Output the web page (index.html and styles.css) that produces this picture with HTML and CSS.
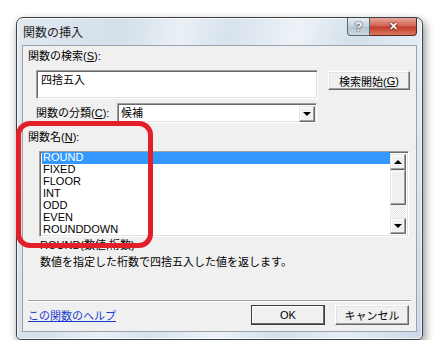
FILE: index.html
```html
<!DOCTYPE html>
<html lang="ja">
<head>
    <meta charset="UTF-8">
    <title>関数の挿入</title>
    <link rel="stylesheet" href="styles.css">
</head>
<body>
    <div class="window">
        <div class="titlebar">
            <span class="title">関数の挿入</span>
            <div class="caption-btns">
                <span class="btn-help">?</span>
                <span class="btn-close">✕</span>
            </div>
        </div>

        <div class="client">
            <div class="label">関数の検索(<u>S</u>):</div>
            <div class="search-row">
                <div class="textbox">四捨五入</div>
                <div class="button btn-search">検索開始(<u>G</u>)</div>
            </div>

            <div class="category-row">
                <span class="cat-label">関数の分類(<u>C</u>):</span>
                <div class="dropdown">
                    <span>候補</span>
                    <span class="drop-arrow"><span class="tri-down"></span></span>
                </div>
            </div>

            <div class="label label-list">関数名(<u>N</u>):</div>
            <div class="listbox">
                <div class="items">
                    <div class="item selected">ROUND</div>
                    <div class="item">FIXED</div>
                    <div class="item">FLOOR</div>
                    <div class="item">INT</div>
                    <div class="item">ODD</div>
                    <div class="item">EVEN</div>
                    <div class="item">ROUNDDOWN</div>
                </div>
                <div class="scrollbar">
                    <span class="sb-btn"><span class="tri-up"></span></span>
                    <span class="sb-thumb"></span>
                    <span class="sb-track"></span>
                    <span class="sb-btn"><span class="tri-down"></span></span>
                </div>
            </div>

            <div class="desc">
                <div>ROUND(数値,桁数)</div>
                <div>数値を指定した桁数で四捨五入した値を返します。</div>
            </div>

            <div class="separator"></div>

            <div class="footer">
                <a class="help-link" href="#">この関数のヘルプ</a>
                <div class="button btn-ok">OK</div>
                <div class="button btn-cancel">キャンセル</div>
            </div>
        </div>

        <!-- 赤い強調枠 -->
        <div class="highlight"></div>
    </div>
</body>
</html>
```

FILE: styles.css
```css
body {
    margin: 0;
    background: #fff;
    font-family: "Liberation Sans", "Noto Sans CJK JP", sans-serif;
    font-size: 11px;
    color: #000;
}

.window {
    position: relative;
    box-sizing: border-box;
    width: 407px;
    height: 323px;
    margin: 17px 0 0 16px;
    padding: 0 5px 7px 5px;
    border: 1px solid #3e4146;
    border-radius: 7px 7px 5px 5px;
    background: linear-gradient(105deg, #e2e9f0 0%, #d4dfea 22%, #eaf0f5 34%, #d7e2ec 44%, #edf2f7 58%, #d3dfea 70%, #e6edf4 84%, #c9d9e8 100%);
    box-shadow: 2px 4px 10px rgba(0, 0, 0, 0.45), inset 0 0 0 1px rgba(255, 255, 255, 0.7);
}

.titlebar {
    display: flex;
    justify-content: space-between;
    align-items: flex-start;
    height: 27px;
}

.title {
    padding: 7px 0 0 1px;
    line-height: 16px;
    font-size: 12px;
    color: #1c1c1c;
}

.caption-btns {
    display: flex;
}

.btn-help,
.btn-close {
    box-sizing: border-box;
    height: 18px;
    display: flex;
    align-items: center;
    justify-content: center;
    color: #fff;
    font-weight: bold;
    border: 1px solid #5c6570;
    border-top: none;
}

.btn-help {
    width: 23px;
    border-radius: 0 0 0 4px;
    background: linear-gradient(to bottom, #e6edf3, #c4d0dc 50%, #b2c1cf 51%, #cbd8e4);
    font-size: 13px;
    text-shadow: 0 0 2px #334, 0 0 1px #223;
}

.btn-close {
    width: 47px;
    border-left: none;
    border-color: #5a2620;
    border-radius: 0 0 4px 0;
    background: linear-gradient(to bottom, #e7a89c, #d0604f 48%, #c23b28 52%, #d9785f);
    font-size: 11px;
    text-shadow: 0 0 2px #400, 0 0 1px #300;
}

.client {
    box-sizing: border-box;
    height: 287px;
    padding: 3px 5px 0 5px;
    background: #f0f0f0;
    border: 1px solid #98a4b0;
}

.label {
    line-height: 14px;
}

.search-row {
    display: flex;
    align-items: flex-start;
    margin-top: 7px;
}

.textbox {
    box-sizing: border-box;
    width: 282px;
    height: 29px;
    margin-left: 8px;
    padding: 2px 4px;
    background: #fff;
    border: 1px solid;
    border-color: #a0a0a0 #fff #fff #a0a0a0;
    box-shadow: inset 1px 1px #696969, inset -1px -1px #e3e3e3;
    line-height: 14px;
}

.button {
    box-sizing: border-box;
    display: flex;
    align-items: center;
    justify-content: center;
    background: #f0f0f0;
    border: 1px solid;
    border-color: #fff #696969 #696969 #fff;
    box-shadow: inset -1px -1px #a0a0a0, inset 1px 1px #e3e3e3;
}

.btn-search {
    width: 82px;
    height: 19px;
    margin: 1px 0 0 10px;
}

.category-row {
    display: flex;
    margin-top: 4px;
}

.cat-label {
    width: 81px;
    margin-left: 8px;
    line-height: 20px;
}

.dropdown {
    box-sizing: border-box;
    display: flex;
    justify-content: space-between;
    width: 200px;
    height: 20px;
    padding: 2px 0 2px 3px;
    background: #fff;
    border: 1px solid;
    border-color: #a0a0a0 #fff #fff #a0a0a0;
    box-shadow: inset 1px 1px #696969, inset -1px -1px #e3e3e3;
    line-height: 14px;
}

.drop-arrow,
.sb-btn {
    box-sizing: border-box;
    display: flex;
    align-items: center;
    justify-content: center;
    width: 16px;
    background: #f0f0f0;
    border: 1px solid;
    border-color: #e3e3e3 #696969 #696969 #e3e3e3;
    box-shadow: inset -1px -1px #a0a0a0, inset 1px 1px #fff;
}

.drop-arrow {
    height: 16px;
    margin-right: 1px;
}

.tri-down,
.tri-up {
    width: 0;
    height: 0;
    border-left: 4px solid transparent;
    border-right: 4px solid transparent;
}

.tri-down {
    border-top: 4px solid #000;
}

.tri-up {
    border-bottom: 4px solid #000;
}

.label-list {
    margin-top: 7px;
}

.listbox {
    box-sizing: border-box;
    display: flex;
    width: 370px;
    height: 86px;
    margin: 7px 0 0 11px;
    padding: 2px;
    background: #fff;
    border: 1px solid;
    border-color: #a0a0a0 #fff #fff #a0a0a0;
    box-shadow: inset 1px 1px #696969, inset -1px -1px #e3e3e3;
}

.items {
    flex: 1;
    overflow: hidden;
    margin-top: -2px;
}

.item {
    height: 12px;
    line-height: 10px;
    padding-left: 1px;
}

.item.selected {
    background: #3399ff;
    color: #fff;
}

.scrollbar {
    display: flex;
    flex-direction: column;
    width: 16px;
}

.sb-btn {
    height: 16px;
}

.sb-thumb {
    box-sizing: border-box;
    height: 35px;
    background: #f0f0f0;
    border: 1px solid;
    border-color: #e3e3e3 #696969 #696969 #e3e3e3;
    box-shadow: inset -1px -1px #a0a0a0, inset 1px 1px #fff;
}

.sb-track {
    flex: 1;
    background: repeating-conic-gradient(#fff 0 25%, #e4e4e4 0 50%) 0 0 / 2px 2px;
}

.desc {
    margin-left: 12px;
    line-height: 17px;
}

.separator {
    margin-top: 29px;
    border-top: 1px solid #a0a0a0;
    border-bottom: 1px solid #fff;
}

.footer {
    display: flex;
    align-items: center;
    margin-top: 3px;
}

.help-link {
    flex: 1;
    color: #1a3bd0;
    text-decoration: underline;
}

.btn-ok,
.btn-cancel {
    width: 74px;
    height: 20px;
}

.btn-ok {
    border-color: #3c3c3c;
    box-shadow: inset -1px -1px #696969, inset 1px 1px #fff;
}

.btn-cancel {
    margin: 0 2px 0 10px;
}

.highlight {
    position: absolute;
    left: -1px;
    top: 103px;
    box-sizing: border-box;
    width: 137px;
    height: 127px;
    border: 5px solid #e3202a;
    border-radius: 14px;
}
```
